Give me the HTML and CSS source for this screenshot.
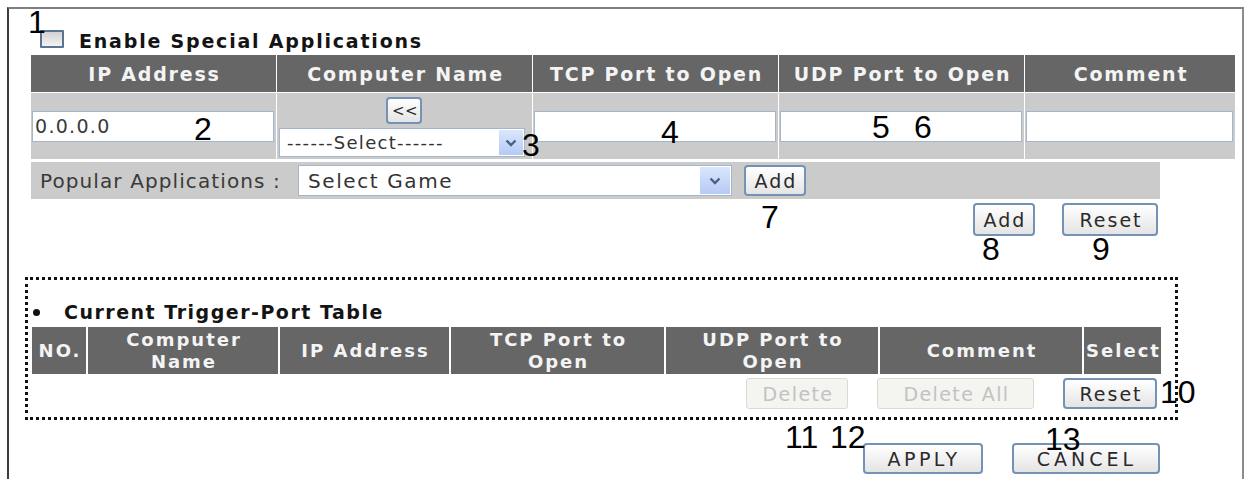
FILE: index.html
```html
<!DOCTYPE html>
<html lang="en">
<head>
<meta charset="utf-8">
<title>Special Applications</title>
<link rel="stylesheet" href="styles.css">
</head>
<body>
<div class="sheet">
  <div class="frame">
    <div class="enable">
      <span class="check"></span>
      <span class="enable-label">Enable Special Applications</span>
    </div>

    <div class="grid1">
      <div class="th">IP Address</div>
      <div class="th">Computer Name</div>
      <div class="th">TCP Port to Open</div>
      <div class="th">UDP Port to Open</div>
      <div class="th">Comment</div>

      <div class="td"><input class="field" type="text" value="0.0.0.0"></div>
      <div class="td cn">
        <button class="btn small" type="button">&lt;&lt;</button>
        <div class="selectbox cnsel">
          <select><option>------Select------</option></select>
          <span class="arrow"><svg width="12" height="8" viewBox="0 0 12 8"><polyline points="1.5,1.5 6,6 10.5,1.5" fill="none" stroke="#4a5f88" stroke-width="2.4"/></svg></span>
        </div>
      </div>
      <div class="td"><input class="field" type="text"></div>
      <div class="td"><input class="field" type="text"></div>
      <div class="td"><input class="field" type="text"></div>
    </div>

    <div class="popular">
      <span class="pop-label">Popular Applications :</span>
      <div class="selectbox game">
        <select><option>Select Game</option></select>
        <span class="arrow wide"><svg width="12" height="8" viewBox="0 0 12 8"><polyline points="1.5,1.5 6,6 10.5,1.5" fill="none" stroke="#4a5f88" stroke-width="2.4"/></svg></span>
      </div>
      <button class="btn pop-add" type="button">Add</button>
    </div>

    <div class="actions1">
      <button class="btn add" type="button">Add</button>
      <button class="btn reset" type="button">Reset</button>
    </div>

    <div class="trigger">
      <div class="trigger-title"><span class="dot"></span>Current Trigger-Port Table</div>
      <div class="grid2">
        <div class="th2">NO.</div>
        <div class="th2">Computer<br>Name</div>
        <div class="th2">IP Address</div>
        <div class="th2">TCP Port to<br>Open</div>
        <div class="th2">UDP Port to<br>Open</div>
        <div class="th2">Comment</div>
        <div class="th2">Select</div>
      </div>
      <div class="actions2">
        <button class="btn off del" type="button" disabled>Delete</button>
        <button class="btn off delall" type="button" disabled>Delete All</button>
        <button class="btn reset2" type="button">Reset</button>
      </div>
    </div>

    <div class="actions3">
      <button class="btn apply" type="button">APPLY</button>
      <button class="btn cancel" type="button">CANCEL</button>
    </div>
  </div>

  <span class="mark m1">1</span>
  <span class="mark m2">2</span>
  <span class="mark m3">3</span>
  <span class="mark m4">4</span>
  <span class="mark m5">5</span>
  <span class="mark m6">6</span>
  <span class="mark m7">7</span>
  <span class="mark m8">8</span>
  <span class="mark m9">9</span>
  <span class="mark m10">10</span>
  <span class="mark m11">11</span>
  <span class="mark m12">12</span>
  <span class="mark m13">13</span>
</div>
</body>
</html>
```

FILE: styles.css
```css
body {
  margin: 0;
  background: #fff;
}

.sheet {
  position: relative;
  width: 1246px;
  height: 479px;
  overflow: hidden;
  padding: 7px 0 0 7px;
  box-sizing: border-box;
  font-family: "DejaVu Sans", sans-serif;
}

.frame {
  width: 1237px;
  height: 480px;
  box-sizing: border-box;
  border-top: 2px solid #808080;
  border-left: 2px solid #3c3c3c;
  border-right: 2px solid #8c8c8c;
  padding-top: 21px;
}

/* enable checkbox row */
.enable {
  display: flex;
  align-items: flex-start;
  gap: 15px;
  margin-left: 31px;
  height: 25px;
}

.check {
  width: 24px;
  height: 18px;
  box-sizing: border-box;
  border: 2px solid #5a7494;
  border-radius: 1px;
  background: linear-gradient(#d2d2d2, #f3f3f3);
}

.enable-label {
  font: bold 19px/22px "DejaVu Sans", sans-serif;
  letter-spacing: 1.8px;
  color: #141414;
}

/* entry table */
.grid1 {
  display: grid;
  grid-template-columns: 245px 255px 245px 245px 210px;
  grid-template-rows: 37px 66px;
  gap: 1px;
  margin-left: 22px;
  width: 1204px;
}

.th {
  background: #666;
  color: #f4f4f4;
  font: bold 19px/22px "DejaVu Sans", sans-serif;
  letter-spacing: 1.8px;
  padding-left: 2px;
  display: flex;
  align-items: center;
  justify-content: center;
  white-space: nowrap;
}

.td {
  background: #cbcbcb;
  display: flex;
  align-items: center;
  padding: 0 2px 0 1px;
}

.field {
  flex: 1;
  min-width: 0;
  height: 31px;
  box-sizing: border-box;
  border: 1px solid #a3b6ca;
  background: #fff;
  font: 19px "DejaVu Sans", sans-serif;
  letter-spacing: 1.3px;
  color: #3a3a3a;
  padding: 0 2px;
  margin: 0;
  outline: none;
}

.td.cn {
  flex-direction: column;
  align-items: flex-start;
  justify-content: flex-start;
  padding: 4px 0 0 2px;
  gap: 4px;
}

/* drop-down lists */
.selectbox {
  display: flex;
  box-sizing: border-box;
  border: 1px solid #a3b6ca;
  background: #fff;
}

.selectbox select {
  flex: 1;
  min-width: 0;
  appearance: none;
  -webkit-appearance: none;
  border: 0;
  background: transparent;
  color: #333;
  outline: none;
  margin: 0;
}

.cnsel {
  width: 246px;
  height: 29px;
}

.cnsel select {
  font: 18px "DejaVu Sans", sans-serif;
  letter-spacing: 1.3px;
  padding: 0 0 0 7px;
}

.arrow {
  width: 24px;
  margin: 1px;
  background: linear-gradient(#dae6fc, #b6caf4);
  display: flex;
  align-items: center;
  justify-content: center;
}

.arrow.wide {
  width: 30px;
}

/* popular applications bar */
.popular {
  display: flex;
  align-items: center;
  margin: 3px 0 0 22px;
  width: 1129px;
  height: 37px;
  background: #cbcbcb;
}

.pop-label {
  flex: none;
  width: 267px;
  box-sizing: border-box;
  padding-left: 9px;
  font: 20px "DejaVu Sans", sans-serif;
  letter-spacing: 1.1px;
  color: #3a3a3a;
  white-space: nowrap;
}

.game {
  width: 434px;
  height: 31px;
}

.game select {
  font: 20px "DejaVu Sans", sans-serif;
  letter-spacing: 1.6px;
  padding: 0 0 0 9px;
}

/* buttons */
.btn {
  box-sizing: border-box;
  border: 2px solid #7392b4;
  border-radius: 4px;
  background: linear-gradient(#ffffff, #e4e4e4);
  font: 19px "DejaVu Sans", sans-serif;
  letter-spacing: 2px;
  color: #2a2a2a;
  padding: 0 0 0 2px;
  margin: 0;
  display: flex;
  align-items: center;
  justify-content: center;
}

.btn.small {
  align-self: center;
  width: 36px;
  height: 27px;
  font-size: 15px;
  letter-spacing: 0.5px;
  margin-right: 3px;
}

.pop-add {
  margin-left: 12px;
  width: 62px;
  height: 31px;
}

.actions1 {
  display: flex;
  justify-content: flex-end;
  gap: 27px;
  margin: 4px 0 0 22px;
  width: 1127px;
}

.add {
  width: 62px;
  height: 33px;
}

.reset {
  width: 96px;
  height: 33px;
}

/* trigger-port table */
.trigger {
  margin: 41px 0 0 16px;
  width: 1153px;
  height: 143px;
  box-sizing: border-box;
  border: 3px dotted #111;
  padding-top: 21px;
}

.trigger-title {
  display: flex;
  align-items: center;
  height: 22px;
  font: bold 19px/22px "DejaVu Sans", sans-serif;
  letter-spacing: 1.5px;
  color: #141414;
}

.dot {
  width: 7px;
  height: 7px;
  border-radius: 50%;
  background: #111;
  margin: 0 24px 0 5px;
}

.grid2 {
  display: grid;
  grid-template-columns: 54px 190px 169px 213px 212px 202px 77px;
  gap: 2px;
  margin: 4px 0 0 4px;
}

.th2 {
  height: 47px;
  background: #666;
  color: #f4f4f4;
  font: bold 18px/22px "DejaVu Sans", sans-serif;
  letter-spacing: 2px;
  padding-left: 2px;
  text-align: center;
  display: flex;
  align-items: center;
  justify-content: center;
  white-space: nowrap;
  overflow: hidden;
}

.actions2 {
  display: flex;
  justify-content: flex-end;
  gap: 29px;
  margin-top: 4px;
  padding-right: 18px;
}

.btn.off {
  border: 1px solid #dddad2;
  border-radius: 3px;
  background: #f4f4f0;
  color: #c2c2c2;
  letter-spacing: 1.4px;
}

.del {
  width: 102px;
  height: 31px;
}

.delall {
  width: 157px;
  height: 31px;
}

.reset2 {
  width: 94px;
  height: 31px;
}

.actions3 {
  display: flex;
  justify-content: flex-end;
  gap: 29px;
  margin-top: 23px;
  width: 1151px;
}

.apply {
  width: 120px;
  height: 31px;
  letter-spacing: 3.5px;
}

.cancel {
  width: 148px;
  height: 31px;
  letter-spacing: 4px;
}

/* numbered callouts */
.mark {
  position: absolute;
  font: 32px/1 "Liberation Sans", Arial, sans-serif;
  color: #000;
}

.m1 { left: 28px; top: 6px; }
.m2 { left: 194px; top: 113px; }
.m3 { left: 522px; top: 129px; }
.m4 { left: 661px; top: 116px; }
.m5 { left: 872px; top: 111px; }
.m6 { left: 914px; top: 111px; }
.m7 { left: 761px; top: 201px; }
.m8 { left: 982px; top: 233px; }
.m9 { left: 1092px; top: 233px; }
.m10 { left: 1160px; top: 376px; }
.m11 { left: 785px; top: 421px; }
.m12 { left: 830px; top: 421px; }
.m13 { left: 1045px; top: 423px; }
```
